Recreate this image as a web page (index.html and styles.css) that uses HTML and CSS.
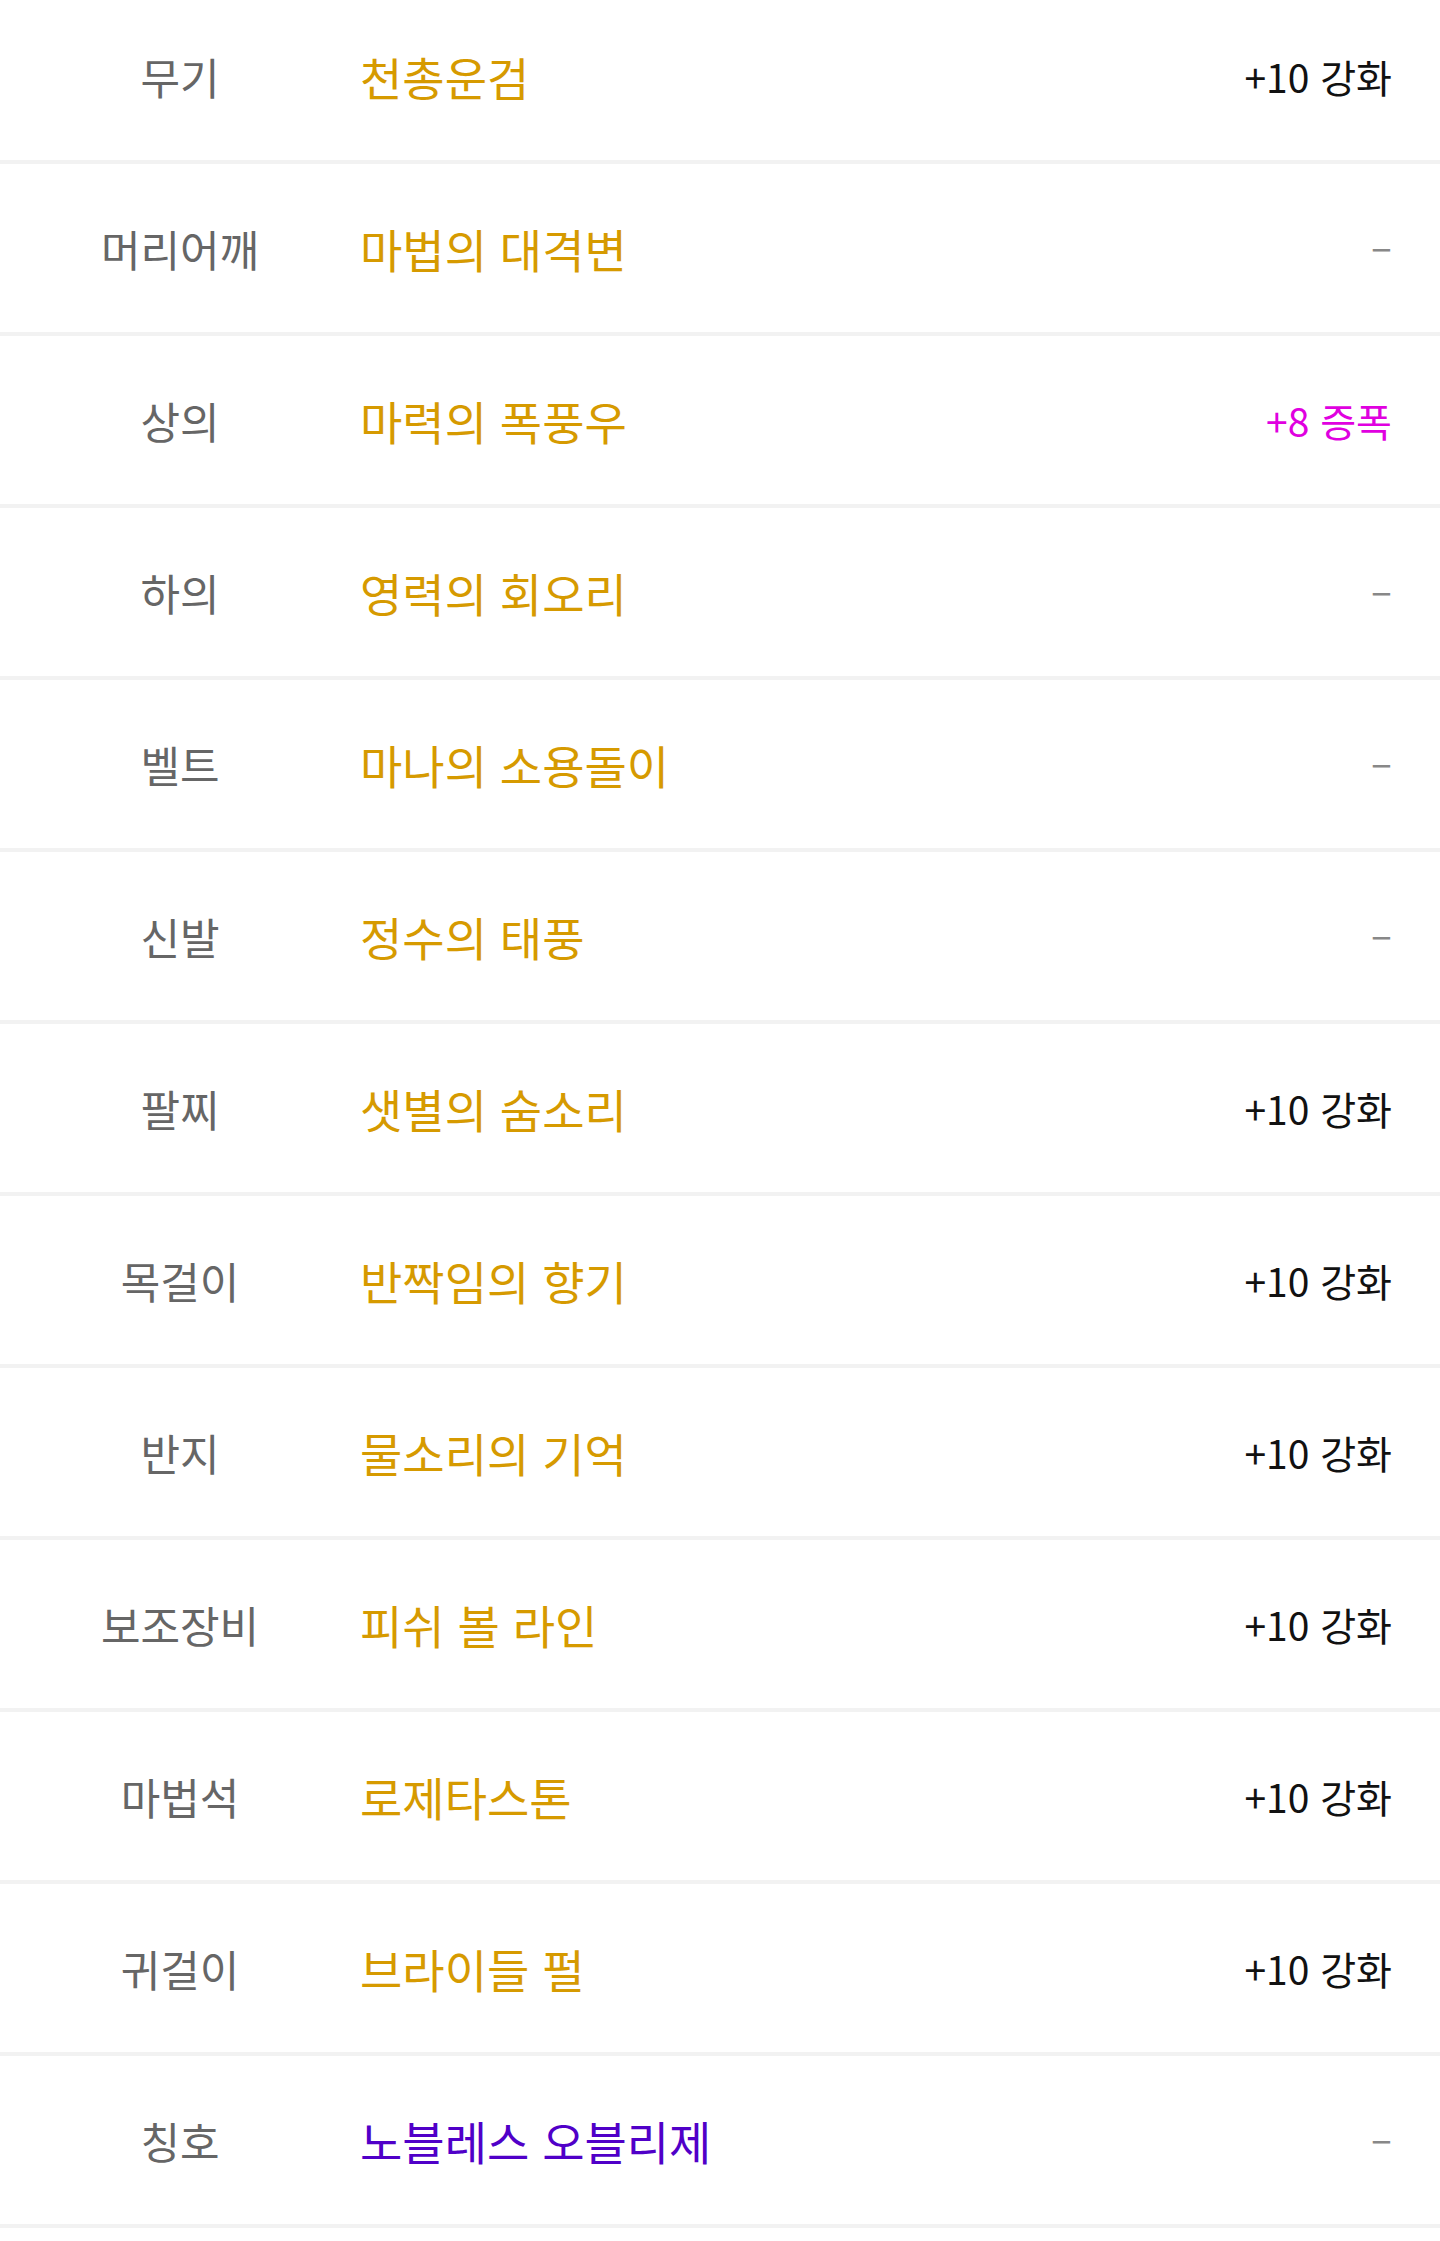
FILE: index.html
```
<!DOCTYPE html>
<html lang="ko">
  <head>
    <meta charset="UTF-8" />
    <meta name="viewport" content="width=device-width, initial-scale=1.0" />
    <title>장비</title>
    <link rel="stylesheet" href="styles.css">
  </head>
  <body>
    <div class="equip-list">
      <div class="equip-row">
        <div class="slot">무기</div>
        <div class="item unique">천총운검</div>
        <div class="grade">+10 강화</div>
      </div>
      <div class="equip-row">
        <div class="slot">머리어깨</div>
        <div class="item unique">마법의 대격변</div>
        <div class="grade empty"><span>–</span></div>
      </div>
      <div class="equip-row">
        <div class="slot">상의</div>
        <div class="item unique">마력의 폭풍우</div>
        <div class="grade amp">+8 증폭</div>
      </div>
      <div class="equip-row">
        <div class="slot">하의</div>
        <div class="item unique">영력의 회오리</div>
        <div class="grade empty"><span>–</span></div>
      </div>
      <div class="equip-row">
        <div class="slot">벨트</div>
        <div class="item unique">마나의 소용돌이</div>
        <div class="grade empty"><span>–</span></div>
      </div>
      <div class="equip-row">
        <div class="slot">신발</div>
        <div class="item unique">정수의 태풍</div>
        <div class="grade empty"><span>–</span></div>
      </div>
      <div class="equip-row">
        <div class="slot">팔찌</div>
        <div class="item unique">샛별의 숨소리</div>
        <div class="grade">+10 강화</div>
      </div>
      <div class="equip-row">
        <div class="slot">목걸이</div>
        <div class="item unique">반짝임의 향기</div>
        <div class="grade">+10 강화</div>
      </div>
      <div class="equip-row">
        <div class="slot">반지</div>
        <div class="item unique">물소리의 기억</div>
        <div class="grade">+10 강화</div>
      </div>
      <div class="equip-row">
        <div class="slot">보조장비</div>
        <div class="item unique">피쉬 볼 라인</div>
        <div class="grade">+10 강화</div>
      </div>
      <div class="equip-row">
        <div class="slot">마법석</div>
        <div class="item unique">로제타스톤</div>
        <div class="grade">+10 강화</div>
      </div>
      <div class="equip-row">
        <div class="slot">귀걸이</div>
        <div class="item unique">브라이들 펄</div>
        <div class="grade">+10 강화</div>
      </div>
      <div class="equip-row">
        <div class="slot">칭호</div>
        <div class="item rare">노블레스 오블리제</div>
        <div class="grade empty"><span>–</span></div>
      </div>
    </div>
  </body>
</html>
```

FILE: styles.css
```
body {
  margin: 0;
  background-color: #fff;
  font-family: "Noto Sans CJK KR", "Noto Sans", sans-serif;
}

.equip-list {
  margin-top: -8px;
}

.equip-row {
  display: grid;
  grid-template-columns: 360px 1fr auto;
  align-items: center;
  height: 168px;
  padding-right: 48px;
  border-bottom: 4px solid #f2f2f2;
}

.slot {
  text-align: center;
  font-size: 43px;
  color: #666;
}

.item {
  font-size: 46px;
}

.unique {
  color: #d69a00;
}

.rare {
  color: #5000c8;
}

.grade {
  text-align: right;
  font-size: 39px;
  color: #111;
}

.grade.empty {
  color: #888;
}

.grade.empty span {
  display: inline-block;
  transform: translateY(-4px);
}

.grade.amp {
  color: #e000e0;
}
```
